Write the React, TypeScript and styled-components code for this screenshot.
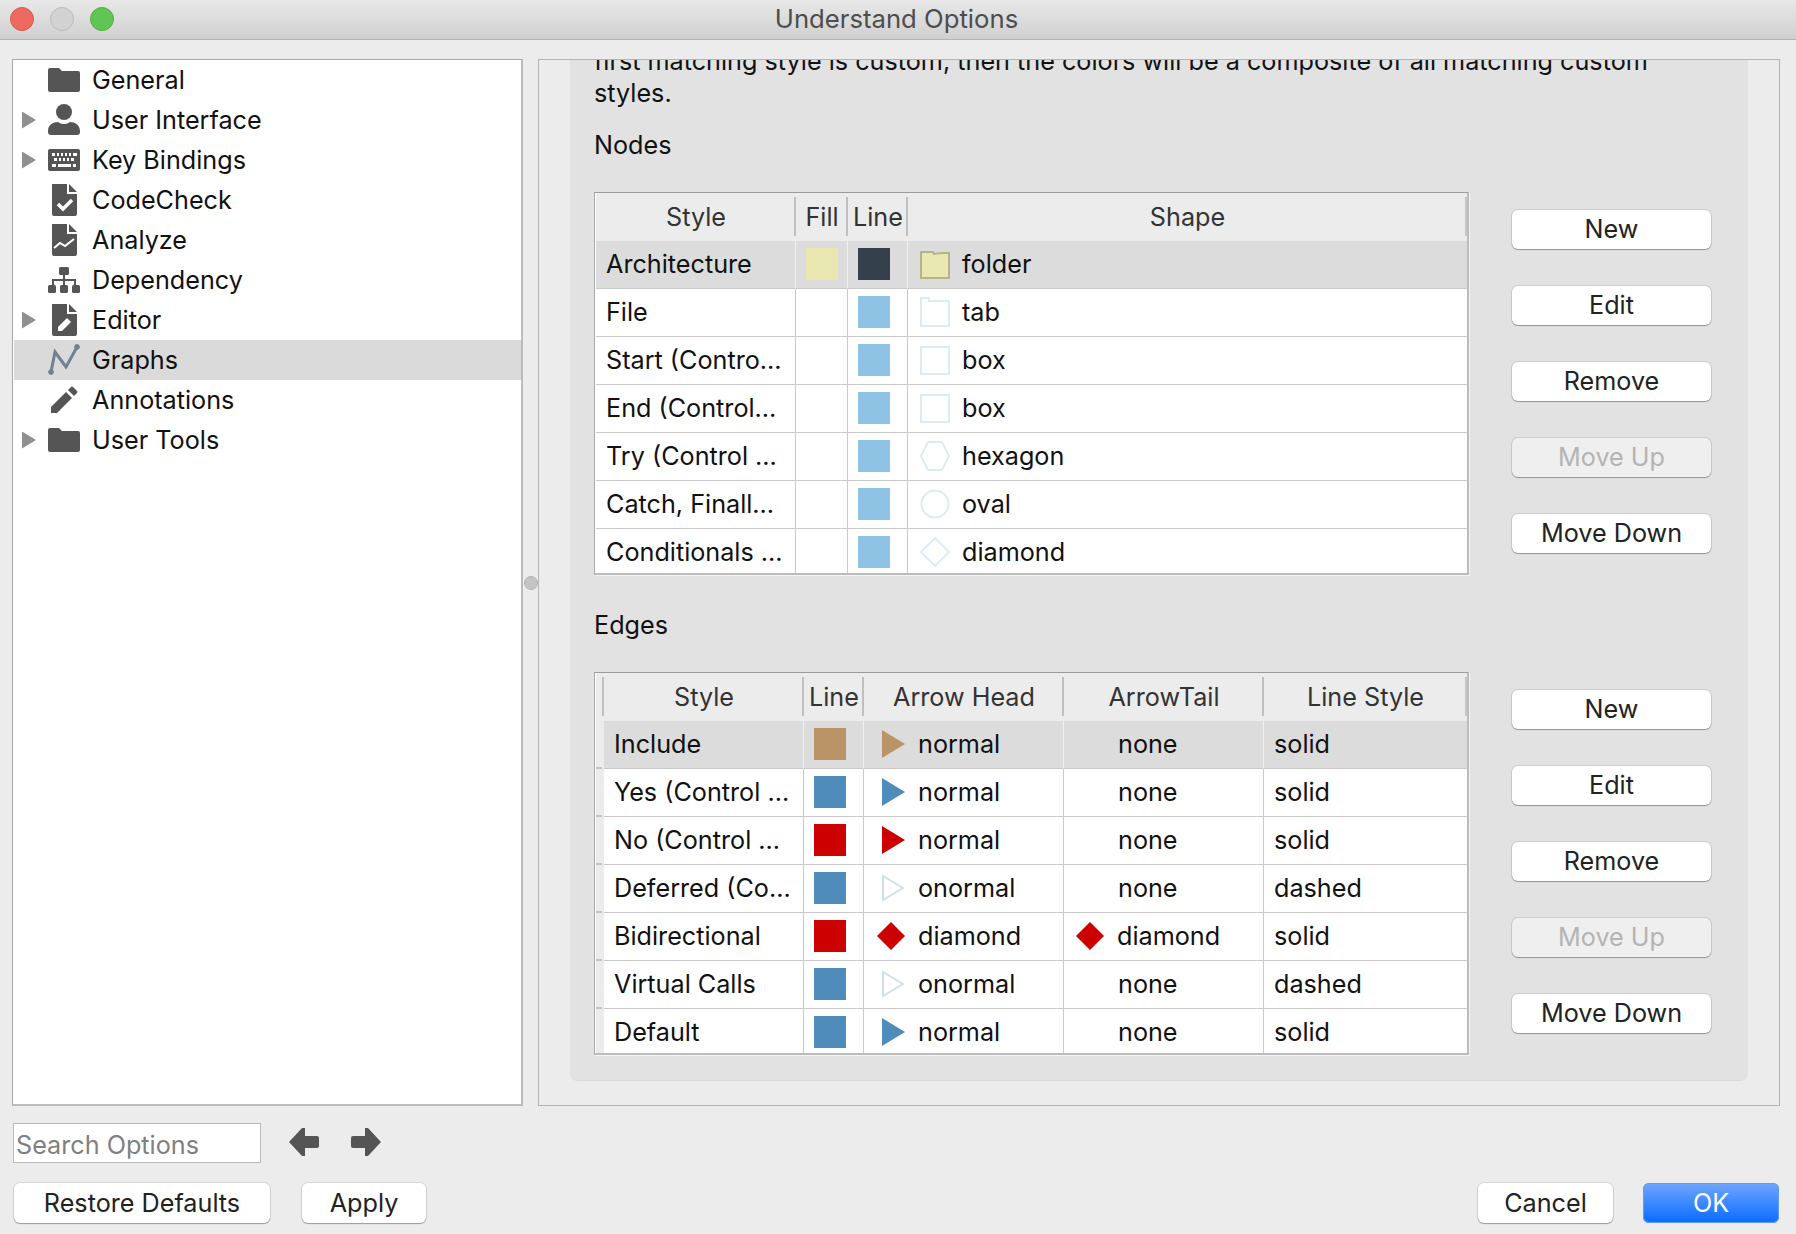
import { FC, ReactNode } from 'react';
import styled, { createGlobalStyle } from 'styled-components';

const GlobalStyle = createGlobalStyle`
  html, body {
    margin: 0;
    padding: 0;
    background: #ececec;
  }
  * {
    box-sizing: border-box;
  }
  body {
    font-family: Inter, "Liberation Sans", sans-serif;
    font-size: 25.2px;
    color: #1c1c1c;
  }
`;

const Window = styled.div`
  width: 1796px;
  height: 1234px;
  display: flex;
  flex-direction: column;
  overflow: hidden;
  background: #ececec;
`;

const TitleBar = styled.header`
  position: relative;
  height: 40px;
  flex: none;
  display: flex;
  align-items: center;
  padding-left: 10px;
  background: linear-gradient(#e8e8e8, #d0d0d0);
  border-bottom: 1px solid #b2b2b2;
`;

const Lights = styled.div`
  display: flex;
  gap: 16px;
  margin-top: -2px;
`;

const Light = styled.span<{ $color: string; $edge: string }>`
  width: 24px;
  height: 24px;
  border-radius: 50%;
  background: ${({ $color }) => $color};
  border: 1px solid ${({ $edge }) => $edge};
`;

const Title = styled.div`
  position: absolute;
  left: -3px;
  right: 0;
  top: 0;
  height: 38px;
  line-height: 38px;
  text-align: center;
  font-size: 25.7px;
  color: #4d4d4d;
`;

const Main = styled.div`
  height: 1047px;
  margin-top: 19px;
  padding: 0 17px 0 12px;
  flex: none;
  display: flex;
`;

const Panel = styled.div`
  border-top: 1px solid #a9a9a9;
  border-left: 1px solid #a9a9a9;
  border-right: 2px solid #bcbcbc;
  border-bottom: 2px solid #bcbcbc;
`;

const TreePanel = styled(Panel)`
  width: 511px;
  flex: none;
  background: #fff;
  padding-left: 1px;
`;

const TreeRow = styled.div<{ $active?: boolean }>`
  height: 40px;
  display: flex;
  align-items: center;
  color: #111;
  background: ${({ $active }) => ($active ? '#dadada' : 'transparent')};
`;

const TreeLabel = styled.span`
  margin-bottom: 1px;
`;

const Caret = styled.span<{ $show?: boolean }>`
  width: 14px;
  height: 17px;
  margin-left: 8px;
  margin-right: 12px;
  flex: none;
  background: ${({ $show }) => ($show ? '#8f8f8f' : 'transparent')};
  clip-path: polygon(0 0, 100% 50%, 0 100%);
`;

const TreeIcon = styled.svg`
  width: 32px;
  height: 32px;
  flex: none;
  margin-right: 12px;
  fill: #555;
`;

const Splitter = styled.div`
  width: 15px;
  flex: none;
  display: flex;
  align-items: center;
  justify-content: center;

  &::after {
    content: '';
    width: 12px;
    height: 12px;
    border-radius: 50%;
    background: #c4c4c4;
    border: 1px solid #b4b4b4;
  }
`;

const OptionsPanel = styled.div`
  width: 1242px;
  flex: none;
  padding: 0 31px 24px;
  overflow: hidden;
  border: 1px solid #b4b4b4;
`;

const Group = styled.div`
  height: 1036px;
  margin-top: -15px;
  padding-left: 24px;
  background: #e2e2e2;
  border-radius: 0 0 8px 8px;
  border-bottom: 1px solid #dadada;
`;

const Note = styled.div`
  line-height: 32px;
  white-space: nowrap;
  color: #111;
`;

const SectionLabel = styled.div<{ $top: number }>`
  margin-top: ${({ $top }) => $top}px;
  line-height: 32px;
  color: #111;
`;

const Section = styled.div`
  display: flex;
  margin-top: 31px;
`;

const Table = styled.div`
  width: 875px;
  height: 383px;
  flex: none;
  overflow: hidden;
  background: #fff;
  border-top: 1px solid #9c9c9c;
  border-left: 1px solid #a9a9a9;
  border-right: 2px solid #bcbcbc;
  border-bottom: 2px solid #bcbcbc;
  box-shadow: 1px 1px 0 #f4f4f4;
`;

const Row = styled.div<{ $cols: string; $selected?: boolean; $head?: boolean }>`
  display: grid;
  grid-template-columns: ${({ $cols }) => $cols};
  height: 48px;
  margin-left: 1px;
  background: ${({ $selected, $head }) =>
    $head ? '#ececec' : $selected ? '#dcdcdc' : '#fff'};
`;

const HeadCell = styled.div<{ $last?: boolean }>`
  position: relative;
  text-align: center;
  line-height: 48px;
  color: #333;
  white-space: nowrap;

  &::after {
    content: '';
    position: absolute;
    right: 0;
    top: 4px;
    bottom: 5px;
    width: 2px;
    background: ${({ $last }) => ($last ? '#c6c6c6' : '#c0c0c0')};
  }
`;

const Gutter = styled.div<{ $head?: boolean; $tick?: boolean }>`
  position: relative;
  background: #ececec;

  &::after {
    content: '';
    display: ${({ $tick }) => ($tick ? 'block' : 'none')};
    position: absolute;
    left: 0;
    right: 2px;
    bottom: 0;
    height: 2px;
    background: #c4c4c4;
  }

  &::before {
    content: '';
    display: ${({ $head }) => ($head ? 'block' : 'none')};
    position: absolute;
    right: 0;
    top: 4px;
    bottom: 5px;
    width: 2px;
    background: #c0c0c0;
  }
`;

const Cell = styled.div<{ $selected?: boolean; $pad?: number; $last?: boolean }>`
  display: flex;
  align-items: center;
  gap: 12px;
  min-width: 0;
  padding: 5px 0 6px ${({ $pad }) => $pad ?? 10}px;
  color: #111;
  white-space: nowrap;
  border-bottom: 1px solid #c9c9c9;
  border-right: ${({ $last, $selected }) =>
    $last ? '0' : `1px solid ${$selected ? '#f0f0f0' : '#c9c9c9'}`};
`;

const CellText = styled.span`
  margin-bottom: 1px;
`;

const Swatch = styled.span<{ $color: string }>`
  width: 32px;
  height: 32px;
  flex: none;
  background: ${({ $color }) => $color};
`;

const Glyph = styled.svg`
  width: 30px;
  height: 30px;
  flex: none;
`;

const ArrowGlyph = styled.svg`
  width: 28px;
  height: 30px;
  flex: none;
  margin-right: 1px;
`;

const ButtonColumn = styled.div`
  display: flex;
  flex-direction: column;
  gap: 37px;
  margin-left: 43px;
  padding-top: 18px;
`;

const Button = styled.button<{ $width?: number; $disabled?: boolean; $primary?: boolean }>`
  width: ${({ $width }) => $width ?? 199}px;
  height: 39px;
  padding: 0 0 2px;
  font: inherit;
  border: 0;
  border-radius: 6px;
  color: ${({ $disabled, $primary }) =>
    $primary ? '#fff' : $disabled ? '#b4b4b4' : '#222'};
  background: ${({ $disabled, $primary }) =>
    $primary
      ? 'linear-gradient(#6fa7ff, #0a6bff)'
      : $disabled
        ? '#efefef'
        : '#fff'};
  box-shadow: ${({ $primary }) =>
    $primary
      ? '0 0 0 1px #5f9bf5 inset'
      : '0 0 0 1px rgba(0, 0, 0, 0.09), 0 1px 1px rgba(0, 0, 0, 0.28)'};
`;

const SearchRow = styled.div`
  display: flex;
  align-items: flex-start;
  margin-top: 17px;
  padding-left: 13px;
`;

const SearchInput = styled.input`
  width: 248px;
  height: 40px;
  padding: 3px 2px 0;
  font: inherit;
  background: #fff;
  border: 1px solid #b9b9b9;
  border-radius: 0;
  outline: none;

  &::placeholder {
    color: #808080;
    opacity: 1;
  }
`;

const NavArrow = styled.svg<{ $gap: number }>`
  width: 30px;
  height: 28px;
  margin-left: ${({ $gap }) => $gap}px;
  margin-top: 5px;
  fill: #555;
`;

const Footer = styled.div`
  display: flex;
  margin-top: 20px;
  padding: 0 17px 0 14px;
`;

const FooterSpacer = styled.div`
  flex: 1;
`;

const FooterButton = styled(Button)`
  height: 40px;
  padding: 0;
`;

const FooterGap = styled.div<{ $width: number }>`
  width: ${({ $width }) => $width}px;
`;

const paths: Record<string, ReactNode> = {
  folder: <path d="M0 6a2 2 0 0 1 2-2h9l3 3h16a2 2 0 0 1 2 2v17a2 2 0 0 1-2 2H2a2 2 0 0 1-2-2z" />,
  user: (
    <>
      <circle cx="16" cy="8" r="8" />
      <path d="M0 27c0-6 5-9 10-9 2 1.400 4 2 6 2s4-.6 6-2c5 0 10 3 10 9v1a3 3 0 0 1-3 3H3a3 3 0 0 1-3-3z" />
    </>
  ),
  keyboard: (
    <path
      fillRule="evenodd"
      d="M2 5h28a2 2 0 0 1 2 2v18a2 2 0 0 1-2 2H2a2 2 0 0 1-2-2V7a2 2 0 0 1 2-2zm2 4v3h3V9zm5 0v3h2V9zm4 0v3h2V9zm4 0v3h2V9zm4 0v3h2V9zm4 0v3h4V9zM6 14v3h3v-3zm5 0v3h2v-3zm4 0v3h2v-3zm4 0v3h2v-3zm4 0v3h3v-3zM4 20v3h4v-3zm6 0v3h13v-3zm15 0v3h3v-3z"
    />
  ),
  check: (
    <>
      <path d="M4 0h15v10h10v20a2 2 0 0 1-2 2H6a2 2 0 0 1-2-2z" />
      <path d="M21 0l8 8h-8z" />
      <path d="M10 20l5 5 9-9" fill="none" stroke="#fff" strokeWidth="3.500" />
    </>
  ),
  analyze: (
    <>
      <path d="M4 0h15v10h10v20a2 2 0 0 1-2 2H6a2 2 0 0 1-2-2z" />
      <path d="M21 0l8 8h-8z" />
      <path d="M6 24l6-5 5 3 9-7" fill="none" stroke="#fff" strokeWidth="2" />
    </>
  ),
  dependency: (
    <>
      <rect x="11" y="3" width="10" height="8" rx="1.500" />
      <rect x="0" y="21" width="8" height="8" rx="1.500" />
      <rect x="12" y="21" width="8" height="8" rx="1.500" />
      <rect x="24" y="21" width="8" height="8" rx="1.500" />
      <path d="M15 11h2v4h11v6h-2v-4H17v4h-2v-4H6v4H4v-6h11z" />
    </>
  ),
  editor: (
    <>
      <path d="M4 0h15v10h10v20a2 2 0 0 1-2 2H6a2 2 0 0 1-2-2z" />
      <path d="M21 0l8 8h-8z" />
      <path d="M10 27v-4l9-9 4 4-9 9z" fill="#fff" />
    </>
  ),
  graph: (
    <g fill="#6f8192" stroke="#6f8192">
      <path d="M3 28L7 8l11 15L29 3" fill="none" strokeWidth="3" />
      <circle cx="3" cy="28" r="2.400" />
      <circle cx="29" cy="3" r="2.400" />
    </g>
  ),
  pencil: (
    <>
      <path d="M3 29v-6L18 8l6 6L9 29z" />
      <path d="M20 6l3-3a1.500 1.500 0 0 1 2 0l4 4a1.500 1.500 0 0 1 0 2l-3 3z" />
    </>
  ),
};

type Item = { label: string; icon: string; caret?: boolean; active?: boolean };

const items: Item[] = [
  { label: 'General', icon: 'folder' },
  { label: 'User Interface', icon: 'user', caret: true },
  { label: 'Key Bindings', icon: 'keyboard', caret: true },
  { label: 'CodeCheck', icon: 'check' },
  { label: 'Analyze', icon: 'analyze' },
  { label: 'Dependency', icon: 'dependency' },
  { label: 'Editor', icon: 'editor', caret: true },
  { label: 'Graphs', icon: 'graph', active: true },
  { label: 'Annotations', icon: 'pencil' },
  { label: 'User Tools', icon: 'folder', caret: true },
];

const PALE = '#dcecf7';

const Shape: FC<{ kind: string }> = ({ kind }) => (
  <Glyph viewBox="0 0 30 30">
    {kind === 'folder' && (
      <path d="M1 3h12l1 2 8-1h7v25H1z" fill="#e8e8b0" stroke="#b4b48e" strokeWidth="2" />
    )}
    {kind === 'tab' && <path d="M1 1h8v3h20v25H1z" fill="#fff" stroke={PALE} strokeWidth="2" />}
    {kind === 'box' && <rect x="1" y="2" width="28" height="27" fill="#fff" stroke={PALE} strokeWidth="2" />}
    {kind === 'hexagon' && <path d="M8 1h14l7 14-7 14H8L1 15z" fill="#fff" stroke={PALE} strokeWidth="2" />}
    {kind === 'oval' && <circle cx="15" cy="15" r="13.500" fill="#fff" stroke={PALE} strokeWidth="2" />}
    {kind === 'diamond' && <path d="M15 1l14 14-14 14L1 15z" fill="#fff" stroke={PALE} strokeWidth="2" />}
  </Glyph>
);

const Head: FC<{ kind: string; color: string }> = ({ kind, color }) => (
  <ArrowGlyph viewBox="0 0 28 30">
    {kind === 'normal' && <path d="M5 1l23 14L5 29z" fill={color} />}
    {kind === 'onormal' && <path d="M6 3l20 12L6 27z" fill="#fff" stroke="#cfe0ee" strokeWidth="2" />}
    {kind === 'diamond' && <path d="M14 1l14 14-14 14L0 15z" fill={color} />}
  </ArrowGlyph>
);

const SKY = '#8ec3e6';
const STEEL = '#4f8cbb';
const RED = '#cc0000';

type NodeStyle = { style: string; fill?: string; line: string; shape: string; selected?: boolean };

const nodeRows: NodeStyle[] = [
  { style: 'Architecture', fill: '#e8e8b0', line: '#35404d', shape: 'folder', selected: true },
  { style: 'File', line: SKY, shape: 'tab' },
  { style: 'Start (Contro...', line: SKY, shape: 'box' },
  { style: 'End (Control...', line: SKY, shape: 'box' },
  { style: 'Try (Control ...', line: SKY, shape: 'hexagon' },
  { style: 'Catch, Finall...', line: SKY, shape: 'oval' },
  { style: 'Conditionals ...', line: SKY, shape: 'diamond' },
];

type EdgeStyle = {
  style: string;
  line: string;
  head: string;
  tail: string;
  lineStyle: string;
  selected?: boolean;
};

const edgeRows: EdgeStyle[] = [
  { style: 'Include', line: '#ba9367', head: 'normal', tail: 'none', lineStyle: 'solid', selected: true },
  { style: 'Yes (Control ...', line: STEEL, head: 'normal', tail: 'none', lineStyle: 'solid' },
  { style: 'No (Control ...', line: RED, head: 'normal', tail: 'none', lineStyle: 'solid' },
  { style: 'Deferred (Co...', line: STEEL, head: 'onormal', tail: 'none', lineStyle: 'dashed' },
  { style: 'Bidirectional', line: RED, head: 'diamond', tail: 'diamond', lineStyle: 'solid' },
  { style: 'Virtual Calls', line: STEEL, head: 'onormal', tail: 'none', lineStyle: 'dashed' },
  { style: 'Default', line: STEEL, head: 'normal', tail: 'none', lineStyle: 'solid' },
];

const NODE_COLS = '200px 52px 60px 1fr';
const EDGE_COLS = '8px 200px 60px 200px 200px 1fr';

const ListButtons: FC = () => (
  <ButtonColumn>
    <Button>New</Button>
    <Button>Edit</Button>
    <Button>Remove</Button>
    <Button $disabled>Move Up</Button>
    <Button>Move Down</Button>
  </ButtonColumn>
);

const App: FC = () => (
  <Window>
    <GlobalStyle />
    <TitleBar>
      <Lights>
        <Light $color="#ec6a5e" $edge="#d9594e" />
        <Light $color="#d2d2d2" $edge="#bcbcbc" />
        <Light $color="#61c554" $edge="#52ae46" />
      </Lights>
      <Title>Understand Options</Title>
    </TitleBar>
    <Main>
      <TreePanel>
        {items.map((item) => (
          <TreeRow key={item.label} $active={item.active}>
            <Caret $show={item.caret} />
            <TreeIcon viewBox="0 0 32 32">{paths[item.icon]}</TreeIcon>
            <TreeLabel>{item.label}</TreeLabel>
          </TreeRow>
        ))}
      </TreePanel>
      <Splitter />
      <OptionsPanel>
        <Group>
          <Note>
            first matching style is custom, then the colors will be a composite of all matching custom
            <br />
            styles.
          </Note>
          <SectionLabel $top={20}>Nodes</SectionLabel>
          <Section>
            <Table>
              <Row $cols={NODE_COLS} $head>
                <HeadCell>Style</HeadCell>
                <HeadCell>Fill</HeadCell>
                <HeadCell>Line</HeadCell>
                <HeadCell $last>Shape</HeadCell>
              </Row>
              {nodeRows.map((row) => (
                <Row key={row.style} $cols={NODE_COLS} $selected={row.selected}>
                  <Cell $selected={row.selected}>
                    <CellText>{row.style}</CellText>
                  </Cell>
                  <Cell $selected={row.selected}>{row.fill && <Swatch $color={row.fill} />}</Cell>
                  <Cell $selected={row.selected}>
                    <Swatch $color={row.line} />
                  </Cell>
                  <Cell $selected={row.selected} $last $pad={12}>
                    <Shape kind={row.shape} />
                    <CellText>{row.shape}</CellText>
                  </Cell>
                </Row>
              ))}
            </Table>
            <ListButtons />
          </Section>
          <SectionLabel $top={34}>Edges</SectionLabel>
          <Section>
            <Table>
              <Row $cols={EDGE_COLS} $head>
                <Gutter $head />
                <HeadCell>Style</HeadCell>
                <HeadCell>Line</HeadCell>
                <HeadCell>Arrow Head</HeadCell>
                <HeadCell>ArrowTail</HeadCell>
                <HeadCell $last>Line Style</HeadCell>
              </Row>
              {edgeRows.map((row) => (
                <Row key={row.style} $cols={EDGE_COLS} $selected={row.selected}>
                  <Gutter $tick />
                  <Cell $selected={row.selected}>
                    <CellText>{row.style}</CellText>
                  </Cell>
                  <Cell $selected={row.selected}>
                    <Swatch $color={row.line} />
                  </Cell>
                  <Cell $selected={row.selected} $pad={13}>
                    <Head kind={row.head} color={row.line} />
                    <CellText>{row.head}</CellText>
                  </Cell>
                  <Cell $selected={row.selected} $pad={row.tail === 'none' ? 54 : 12}>
                    {row.tail === 'diamond' && <Head kind="diamond" color={RED} />}
                    <CellText>{row.tail}</CellText>
                  </Cell>
                  <Cell $selected={row.selected} $last $pad={10}>
                    <CellText>{row.lineStyle}</CellText>
                  </Cell>
                </Row>
              ))}
            </Table>
            <ListButtons />
          </Section>
        </Group>
      </OptionsPanel>
    </Main>
    <SearchRow>
      <SearchInput placeholder="Search Options" />
      <NavArrow $gap={28} viewBox="0 0 30 28">
        <path d="M0 14L13 0h3v8h12a2 2 0 0 1 2 2v8a2 2 0 0 1-2 2H16v8h-3z" />
      </NavArrow>
      <NavArrow $gap={32} viewBox="0 0 30 28">
        <path d="M30 14L17 0h-3v8H2a2 2 0 0 0-2 2v8a2 2 0 0 0 2 2h12v8h3z" />
      </NavArrow>
    </SearchRow>
    <Footer>
      <FooterButton $width={256}>Restore Defaults</FooterButton>
      <FooterGap $width={32} />
      <FooterButton $width={124}>Apply</FooterButton>
      <FooterSpacer />
      <FooterButton $width={135}>Cancel</FooterButton>
      <FooterGap $width={30} />
      <FooterButton $width={136} $primary>
        OK
      </FooterButton>
    </Footer>
  </Window>
);

export default App;
